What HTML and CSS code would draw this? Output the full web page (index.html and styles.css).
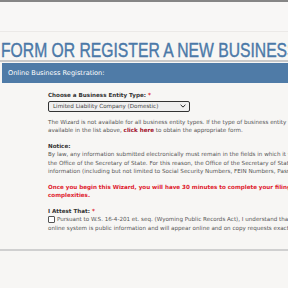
FILE: index.html
```html
<!DOCTYPE html>
<html>
<head>
<meta charset="utf-8">
<link rel="stylesheet" href="styles.css">
</head>
<body>
<div class="topbar"></div>
<div class="title-wrap"><h1 class="title">FORM OR REGISTER A NEW BUSINESS</h1></div>
<div class="panel">
  <div class="panel-head">Online Business Registration:</div>
  <div class="panel-body">
    <div class="field">
      <div class="label">Choose a Business Entity Type: <span class="req">*</span></div>
      <div class="select"><span>Limited Liability Company (Domestic)</span>
        <svg class="chev" width="6" height="4" viewBox="0 0 6 4"><path d="M0.6 0.8 L3 3.1 L5.4 0.8" fill="none" stroke="#222" stroke-width="1"/></svg>
      </div>
    </div>
    <p class="text">The Wizard is not available for all business entity types. If the type of business entity you wish to file is not<br>available in the list above, <a class="link">click here</a> to obtain the appropriate form.</p>
    <div class="label">Notice:</div>
    <p class="text notice">By law, any information submitted electronically must remain in the fields in which it was entered and will be available on<br>the Office of the Secretary of State. For this reason, the Office of the Secretary of State strongly recommends that no sensitive<br>information (including but not limited to Social Security Numbers, FEIN Numbers, Passport Numbers) be entered.</p>
    <p class="warn">Once you begin this Wizard, you will have 30 minutes to complete your filing before your session expires due to<br>complexities.</p>
    <div class="label">I Attest That: <span class="req">*</span></div>
    <div class="attest">
      <span class="check"></span><span>Pursuant to W.S. 16-4-201 et. seq. (Wyoming Public Records Act), I understand that all information entered into this</span>
    </div>
    <div class="text nm">online system is public information and will appear online and on copy requests exactly as entered.</div>
  </div>
</div>
<div class="rule"></div>
</body>
</html>
```
FILE: styles.css
```css
html, body {
  margin: 0;
  padding: 0;
  background: #f7f6f4;
  overflow: hidden;
  width: 288px;
  height: 288px;
}
body {
  font-family: "DejaVu Sans", Verdana, sans-serif;
  color: #555;
}
.topbar {
  height: 29px;
  border-top: 2px solid #868686;
  border-bottom: 1px solid #ebe9e7;
  background: #f8f7f6;
}
.title-wrap {
  height: 30px;
  box-sizing: border-box;
  padding: 9px 0 0 1px;
  border-bottom: 2px solid #c9c9c9;
  width: 600px;
}
.title {
  margin: 0;
  font-family: "Liberation Sans", Arial, sans-serif;
  font-weight: normal;
  font-size: 19.5px;
  line-height: 19px;
  color: #4b79a8;
  white-space: nowrap;
  transform: scaleX(0.805);
  transform-origin: 0 0;
  -webkit-text-stroke: 0.4px #4b79a8;
}
.panel {
  margin: 1px 0 0 2px;
  width: 600px;
}
.panel-head {
  height: 20px;
  background: #4f7ba7;
  color: #fff;
  font-size: 6.6px;
  line-height: 20px;
  padding-left: 6px;
}
.panel-body {
  padding: 8px 0 0 46px;
  font-size: 5.6px;
  line-height: 8.5px;
  white-space: nowrap;
}
.label {
  font-weight: bold;
  color: #333;
}
.req {
  color: #e01b2e;
}
.select {
  margin-top: 1px;
  width: 133px;
  height: 9px;
  border: 1px solid #333;
  border-radius: 2px;
  background: #efefef;
  color: #444;
  display: flex;
  align-items: center;
  justify-content: space-between;
  padding: 0 3px 0 4px;
  box-sizing: content-box;
}
.chev {
  display: block;
}
.text {
  margin: 6px 0 7px;
}
.text.notice {
  margin-top: 0;
}
.text.nm {
  margin: 0;
}
.link {
  color: #a0102a;
  font-weight: bold;
}
.warn {
  margin: 0 0 7px;
  color: #e01b2e;
  font-weight: bold;
}
.attest {
  display: flex;
  align-items: center;
  gap: 2px;
}
.check {
  width: 5px;
  height: 5px;
  border: 1px solid #555;
  border-radius: 1px;
  background: #fff;
}
.rule {
  margin-top: 17px;
  height: 2px;
  background: #d0d0d0;
}
```
